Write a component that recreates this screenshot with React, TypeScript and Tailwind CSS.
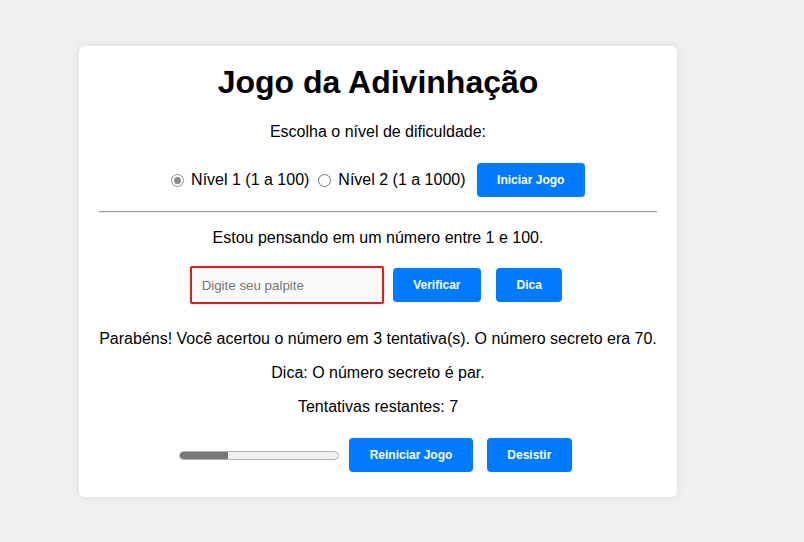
import { useState } from "react"

const btn = "h-[34px] px-[20.5px] bg-[#007bff] text-white text-[12px] leading-[14px] font-bold rounded-[4px] shrink-0"

function Radio({ checked, onClick }: { checked: boolean, onClick: () => void }) {
    return (
        <span
            onClick={onClick}
            className={`w-[13px] h-[13px] rounded-full border flex items-center justify-center shrink-0 cursor-pointer ${checked ? 'border-[#8c8c8c]' : 'border-[#767676]'} bg-white`}
        >
            {checked && <span className="w-[7px] h-[7px] rounded-full bg-[#8c8c8c]" />}
        </span>
    )
}

export default function App() {

    const [level, setLevel] = useState(1)
    const [guess, setGuess] = useState('')

    return (
        <div className="min-h-screen bg-[#f0f0f0] pt-[46px] font-['Liberation_Sans',Arial,sans-serif] text-black">
            <div className="ml-[79px] w-[598px] bg-white rounded-[6px] shadow-[0_0_10px_rgba(0,0,0,0.08)] px-5 pt-[18px] pb-[25px] text-center">

                <h1 className="text-[32px] leading-[37px] font-bold">Jogo da Adivinhação</h1>

                <p className="mt-[22px] text-[16px] leading-[18px]">Escolha o nível de dificuldade:</p>

                <div className="mt-[22px] h-[34px] flex items-center justify-center text-[16px] leading-[18px]">
                    <Radio checked={level === 1} onClick={() => setLevel(1)} />
                    <span className="ml-[7px]">Nível 1 (1 a 100)</span>
                    <span className="ml-[9px]"><Radio checked={level === 2} onClick={() => setLevel(2)} /></span>
                    <span className="ml-[7px]">Nível 2 (1 a 1000)</span>
                    <button className={`${btn} ml-[11px]`}>Iniciar Jogo</button>
                </div>

                <div className="mt-[14px] border-t border-b border-t-[#9a9a9a] border-b-[#eeeeee]" />

                <p className="mt-[16px] text-[16px] leading-[18px]">Estou pensando em um número entre 1 e 100.</p>

                <div className="mt-[19px] flex items-center justify-center pr-[4px]">
                    <input
                        type="text"
                        value={guess}
                        onChange={e => setGuess(e.target.value)}
                        placeholder="Digite seu palpite"
                        className="w-[194px] h-[38px] px-[10px] text-[13.33px] leading-[14px] bg-[#fafafa] border-2 border-[#d42222] rounded-[2px] shadow-[0_0_3px_rgba(212,34,34,0.25)] placeholder:text-[#757575] outline-none"
                    />
                    <button className={`${btn} ml-[9px]`}>Verificar</button>
                    <button className={`${btn} ml-[15px]`}>Dica</button>
                </div>

                <p className="mt-[26px] text-[16px] leading-[18px]">Parabéns! Você acertou o número em 3 tentativa(s). O número secreto era 70.</p>
                <p className="mt-[16px] text-[16px] leading-[18px]">Dica: O número secreto é par.</p>
                <p className="mt-[16px] text-[16px] leading-[18px]">Tentativas restantes: 7</p>

                <div className="mt-[22px] flex items-center justify-center pr-[5px]">
                    <div className="w-[160px] h-[9px] rounded-full border border-[#b3b3b3] bg-[#efefef] overflow-hidden shrink-0">
                        <div className="h-full bg-[#777777]" style={{ width: `${(3 / 10) * 100}%` }} />
                    </div>
                    <button className={`${btn} ml-[10px]`}>Reiniciar Jogo</button>
                    <button className={`${btn} ml-[14px]`}>Desistir</button>
                </div>
            </div>
        </div>
    )
}
